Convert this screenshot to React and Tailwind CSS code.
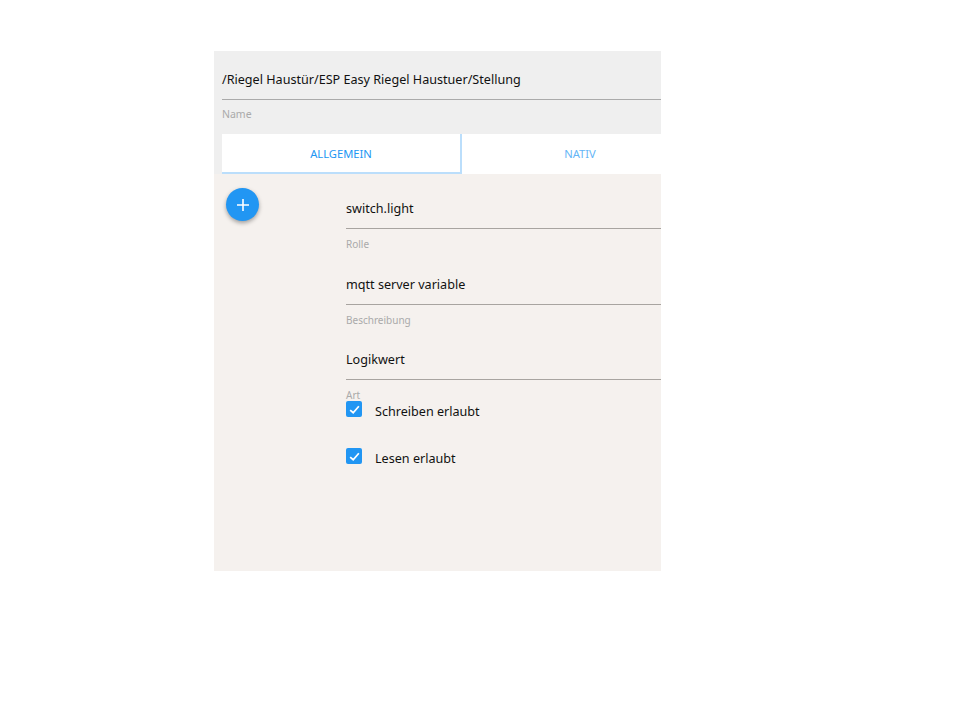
const font = { fontFamily: '"Noto Sans", sans-serif' };

function Field({ value, label, className }) {
  return (
    <div className={className}>
      <div className="text-[12.6px] leading-[18px] text-[#111] border-b border-[#a8a4a0] pb-[10px]">{value}</div>
      <div className="text-[10px] leading-[14px] text-[#aaa] mt-2">{label}</div>
    </div>
  );
}

function Check({ label, className }) {
  return (
    <div className={`flex items-center ${className}`}>
      <span className="w-4 h-4 rounded-[2px] bg-[#2196f3] flex items-center justify-center">
        <svg width="13" height="13" viewBox="0 0 12 12" fill="none">
          <path d="M2 6.5 L4.8 9 L10 3" stroke="#fff" strokeWidth="1.6" />
        </svg>
      </span>
      <span className="ml-[13px] text-[12.6px] leading-[18px] text-[#111] relative top-[3px]">{label}</span>
    </div>
  );
}

export default function App() {
  return (
    <div className="min-h-[720px] bg-white pt-[51px] pl-[214px]" style={font}>
      <div className="w-[447px] h-[520px] flex flex-col bg-[#f5f1ee] overflow-hidden">
        <div className="bg-[#efefef] h-[83px] pl-2 pt-[20px]">
          <div className="text-[12.6px] leading-[18px] text-[#111] border-b border-[#aaa] pb-[10px]">
            /Riegel Haustür/ESP Easy Riegel Haustuer/Stellung
          </div>
          <div className="text-[10.5px] leading-[14px] text-[#aaa] mt-[7px]">Name</div>
        </div>
        <div className="bg-[#efefef] pl-2 flex h-10">
          <div className="w-[240px] shrink-0 bg-white border-b-2 border-r-2 border-[#bbdefb] pt-[3px] flex items-center justify-center text-[11.2px] text-[#2196f3]">
            ALLGEMEIN
          </div>
          <div className="w-[236px] shrink-0 bg-white flex items-center justify-center text-[11.2px] text-[#64b5f6]">
            NATIV
          </div>
        </div>
        <div className="flex flex-1">
          <div className="w-[132px] pl-3 pt-[14px]">
            <button className="w-[33px] h-[33px] rounded-full bg-[#2196f3] shadow-[0_2px_4px_rgba(0,0,0,0.35)] flex items-center justify-center">
              <svg width="14" height="14" viewBox="0 0 14 14" fill="none">
                <path d="M7 1 V13 M1 7 H13" stroke="#fff" strokeWidth="1.6" />
              </svg>
            </button>
          </div>
          <div className="flex-1 pt-[26px]">
            <Field value="switch.light" label="Rolle" />
            <Field value="mqtt server variable" label="Beschreibung" className="mt-[25px]" />
            <Field value="Logikwert" label="Art" className="mt-[24px]" />
            <Check label="Schreiben erlaubt" className="mt-[-2px]" />
            <Check label="Lesen erlaubt" className="mt-[29px]" />
          </div>
        </div>
      </div>
    </div>
  );
}
